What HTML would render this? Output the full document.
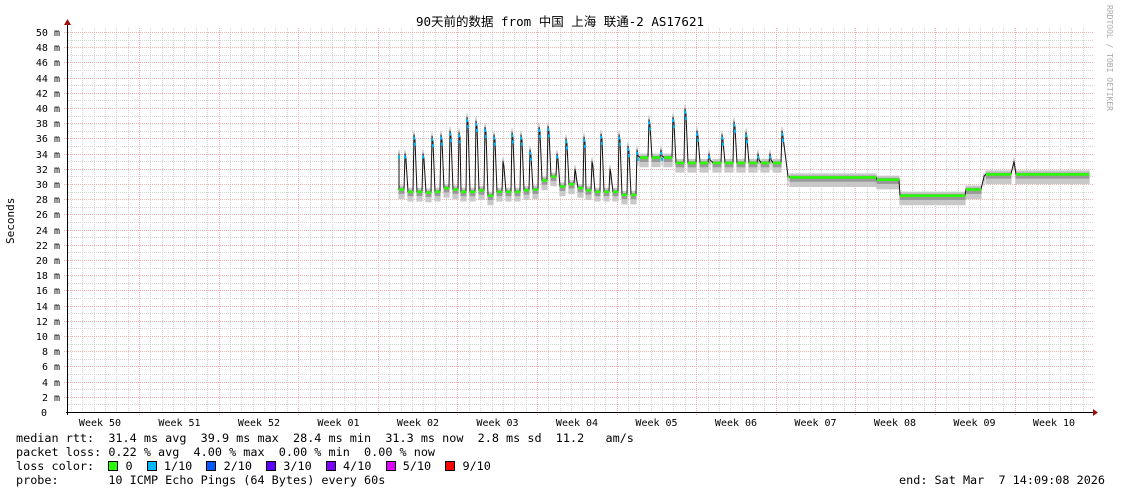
<!DOCTYPE html>
<html><head><meta charset="utf-8"><style>
html,body{margin:0;padding:0;background:#fff;width:1121px;height:494px;overflow:hidden;position:relative}
svg{display:block;position:absolute;left:0;top:0}
text{font-family:"DejaVu Sans Mono","Liberation Mono","Noto Sans CJK SC",monospace;font-size:11px;fill:#000}
.t{position:absolute;left:16px;font-family:"DejaVu Sans Mono","Liberation Mono",monospace;font-size:11.8px;white-space:pre;line-height:14px;color:#000}
.b{display:inline-block;width:8px;height:8px;border:1px solid #000;vertical-align:-1px}
</style></head><body>
<svg id="g" width="1121" height="494" xmlns="http://www.w3.org/2000/svg">
<defs>
<pattern id="dh" width="2" height="1" patternUnits="userSpaceOnUse"><rect width="1" height="1" fill="#d4d4d4"/></pattern>
<pattern id="dv" width="1" height="2" patternUnits="userSpaceOnUse"><rect width="1" height="1" fill="#d4d4d4"/></pattern>
<pattern id="rh" width="2" height="1" patternUnits="userSpaceOnUse"><rect width="1" height="1" fill="#f2b0b0"/></pattern>
<pattern id="rv" width="1" height="2" patternUnits="userSpaceOnUse"><rect width="1" height="1" fill="#f2b0b0"/></pattern>
</defs>
<g id="grid" shape-rendering="crispEdges"></g>
<g id="data"></g>
<line x1="66" y1="412.5" x2="1094" y2="412.5" stroke="#000" stroke-width="1"/>
<line x1="67.5" y1="25" x2="67.5" y2="415" stroke="#000" stroke-width="1"/>
<polygon points="64,25 71,25 67.5,19" fill="#a01010"/>
<polygon points="1093,409 1093,416 1098,412.5" fill="#a01010"/>
<text x="560" y="26" text-anchor="middle" style="font-size:12.5px;font-family:'DejaVu Sans Mono','Noto Sans CJK SC',monospace">90天前的数据 from 中国 上海 联通-2 AS17621</text>
<text transform="translate(1107,5) rotate(90)" style="font-size:8px;fill:#aaa">RRDTOOL / TOBI OETIKER</text>
<text transform="translate(14,244) rotate(-90)" style="font-size:11px">Seconds</text>
<g id="lbl"></g>
</svg>
<div class="t" style="top:431px">median rtt:  31.4 ms avg  39.9 ms max  28.4 ms min  31.3 ms now  2.8 ms sd  11.2   am/s</div>
<div class="t" style="top:445px">packet loss: 0.22 % avg  4.00 % max  0.00 % min  0.00 % now</div>
<div class="t" style="top:459px">loss color:  <span class="b" style="background:#26ff00"></span> 0  <span class="b" style="background:#00b8ff"></span> 1/10  <span class="b" style="background:#0059ff"></span> 2/10  <span class="b" style="background:#5e00ff"></span> 3/10  <span class="b" style="background:#7e00ff"></span> 4/10  <span class="b" style="background:#dd00ff"></span> 5/10  <span class="b" style="background:#ff0000"></span> 9/10</div>
<div class="t" style="top:473px">probe:       10 ICMP Echo Pings (64 Bytes) every 60s</div>
<div class="t" style="top:473px;left:auto;right:16px">end: Sat Mar  7 14:09:08 2026</div>
<script>
var NS="http://www.w3.org/2000/svg";
function el(p,n,a,t){var e=document.createElementNS(NS,n);for(var k in a)e.setAttribute(k,a[k]);if(t!=null)e.textContent=t;p.appendChild(e);return e;}
var grid=document.getElementById('grid'),lbl=document.getElementById('lbl'),data=document.getElementById('data');
function Y(v){return 412-v*7.6;}
for(var m=1;m<=50;m+=2){var y=Math.round(Y(m));el(grid,'rect',{x:68,width:1025,y:y,height:1,fill:'url(#dh)'});}
for(var w=-1;w<12;w++)for(var d=1;d<7;d++){var x=139+w*79.6+d*79.6/7;if(x<68||x>1093)continue;el(grid,'rect',{x:Math.round(x),width:1,y:28,height:384,fill:'url(#dv)'});}
for(var m=2;m<=50;m+=2){var y=Math.round(Y(m));el(grid,'rect',{x:63,width:1030,y:y,height:1,fill:'url(#rh)'});}
for(var i=0;i<12;i++){el(grid,'rect',{x:Math.round(139+i*79.6),width:1,y:28,height:387,fill:'url(#rv)'});}
for(var m=0;m<=50;m+=2){el(lbl,'text',{x:m?60:47,y:Math.round(Y(m))+4,'text-anchor':'end',style:'font-size:10px'},m?m+' m':'0');}
var wk=['50','51','52','01','02','03','04','05','06','07','08','09','10'];
for(var i=0;i<13;i++)el(lbl,'text',{x:100+i*79.5,y:426,'text-anchor':'middle',style:'font-size:10px'},'Week '+wk[i]);
var pts=[];
function seg(x0,x1,v){for(var x=x0;x<x1;x++)pts.push([x,v]);}
var peaks=[34,36.5,34,36.3,36.5,37,36.8,38.8,38.3,37.5,36.5,33,36.8,36.5,34.5,37.5,37.6,34,36,32,36.2,33,36.6,32,36.5,35,34.5];
var base=[29.3,29,29,28.9,29,29.5,29.3,29,29,29.2,28.5,29,29,29,29.2,29.3,30.5,31,29.7,30,29.5,29.2,29,29,29,28.6,28.6];
var x=399,sp=(640-399)/peaks.length;
pts.push([399,34]);
for(var k=0;k<peaks.length;k++){var b=base[k];var n=Math.round(sp)-3;for(var j=0;j<n;j++)pts.push([Math.round(x)+j,b]);pts.push([Math.round(x)+n,peaks[k]]);pts.push([Math.round(x)+n+1,peaks[k]-0.8]);x+=sp;}
var peaks2=[38.5,34.5,38.8,39.9,37,34,36.5,38.2,36.8,34,34,37];
var x2=640,sp2=(785-640)/peaks2.length;
for(var k=0;k<peaks2.length;k++){var n=Math.round(sp2)-3;for(var j=0;j<n;j++)pts.push([Math.round(x2)+j,k<3?33.5:32.8]);pts.push([Math.round(x2)+n,peaks2[k]]);pts.push([Math.round(x2)+n+1,peaks2[k]-0.8]);x2+=sp2;}
pts.push([788,31]);seg(790,877,30.9);seg(877,900,30.6);seg(900,966,28.5);seg(966,982,29.3);pts.push([984,31]);seg(986,1012,31.3);pts.push([1014,33]);seg(1016,1090,31.3);
var d='';pts.forEach(function(p){d+=' M'+p[0]+','+Y(p[1]+0.5)+' L'+p[0]+','+Y(p[1]-1.3);});
el(data,'path',{d:d,stroke:'#c8c8c8','stroke-width':1.2});
var d2='';pts.forEach(function(p){d2+=' M'+p[0]+','+Y(p[1]+0.2)+' L'+p[0]+','+Y(p[1]-0.6);});
el(data,'path',{d:d2,stroke:'#999','stroke-width':1});
el(data,'polyline',{points:pts.map(function(p){return p[0]+','+Y(p[1]);}).join(' '),fill:'none',stroke:'#111','stroke-width':1});
pts.forEach(function(p,i){var n=pts[i+1];if(n&&Math.abs(n[1]-p[1])<0.2)el(data,'rect',{x:p[0],y:Y(p[1])-1,width:1.2,height:2.5,fill:'#26ff00'});else if(p[1]>33.5)el(data,'rect',{x:p[0]-1,y:Y(p[1])+2,width:2,height:3,fill:'#00b8ff'});});
</script>
</body></html>
